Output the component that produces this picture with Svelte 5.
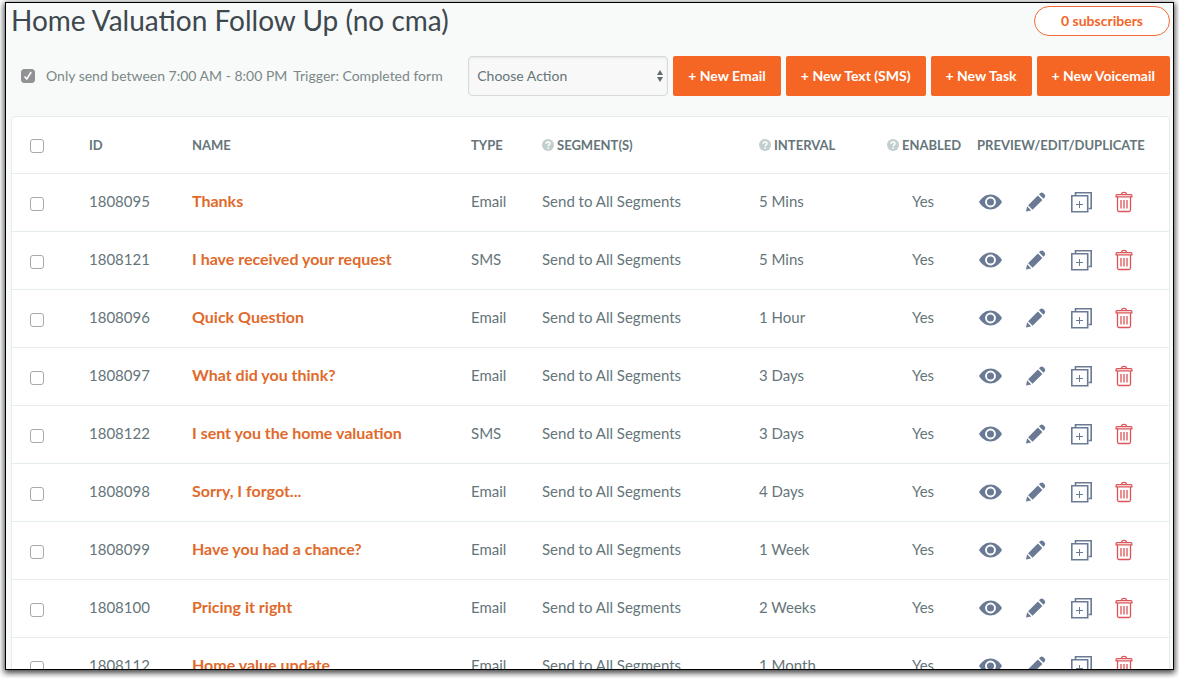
<script>
  const rows = [
    { id: 1808095, name: 'Thanks', type: 'Email', interval: '5 Mins' },
    { id: 1808121, name: 'I have received your request', type: 'SMS', interval: '5 Mins' },
    { id: 1808096, name: 'Quick Question', type: 'Email', interval: '1 Hour' },
    { id: 1808097, name: 'What did you think?', type: 'Email', interval: '3 Days' },
    { id: 1808122, name: 'I sent you the home valuation', type: 'SMS', interval: '3 Days' },
    { id: 1808098, name: 'Sorry, I forgot...', type: 'Email', interval: '4 Days' },
    { id: 1808099, name: 'Have you had a chance?', type: 'Email', interval: '1 Week' },
    { id: 1808100, name: 'Pricing it right', type: 'Email', interval: '2 Weeks' },
    { id: 1808112, name: 'Home value update', type: 'Email', interval: '1 Month' }
  ];
  const actions = ['+ New Email', '+ New Text (SMS)', '+ New Task', '+ New Voicemail'];
  let limited = $state(true);
</script>

{#snippet help()}
  <svg class="help" viewBox="0 0 12 12" aria-hidden="true">
    <circle cx="6" cy="6" r="6" fill="#c3cfce" />
    <path d="M4 4.7C4 3.5 4.8 2.9 6 2.9s2 .7 2 1.7c0 1.4-1.8 1.2-1.8 2.6M6.2 8.2v1.5" fill="none" stroke="#fff" stroke-width="1.5" />
  </svg>
{/snippet}

<main class="frame">
  <header class="top">
    <h1>Home Valuation Follow Up (no cma)</h1>
    <a class="pill" href="#subscribers">0 subscribers</a>
  </header>

  <div class="toolbar">
    <div class="schedule">
      <label><input type="checkbox" bind:checked={limited} /><span>Only send between 7:00 AM - 8:00 PM</span></label>
      <span>Trigger: Completed form</span>
    </div>
    <div class="actions">
      <div class="select">
        <select aria-label="Choose Action"><option>Choose Action</option></select>
        <svg viewBox="0 0 6 14" aria-hidden="true"><path d="M0 6 3 1l3 5zM0 8h6l-3 5z" fill="#5f6b6c" /></svg>
      </div>
      {#each actions as action}
        <button class="primary">{action}</button>
      {/each}
    </div>
  </div>

  <section class="card">
    <table>
      <colgroup>
        <col class="c-check" /><col class="c-id" /><col /><col class="c-type" />
        <col class="c-seg" /><col class="c-int" /><col class="c-on" /><col class="c-act" />
      </colgroup>
      <thead>
        <tr>
          <th class="check"><input type="checkbox" aria-label="Select all" /></th>
          <th>ID</th>
          <th>NAME</th>
          <th>TYPE</th>
          <th><span class="hint">{@render help()}SEGMENT(S)</span></th>
          <th><span class="hint">{@render help()}INTERVAL</span></th>
          <th><span class="hint">{@render help()}ENABLED</span></th>
          <th class="wide">PREVIEW/EDIT/DUPLICATE</th>
        </tr>
      </thead>
      <tbody>
        {#each rows as row (row.id)}
          <tr>
            <td class="check"><input type="checkbox" aria-label={row.name} /></td>
            <td>{row.id}</td>
            <td><a href="#{row.id}">{row.name}</a></td>
            <td>{row.type}</td>
            <td>Send to All Segments</td>
            <td>{row.interval}</td>
            <td class="center">Yes</td>
            <td class="tools">
              <div class="icons">
                <button aria-label="Preview">
                  <svg viewBox="0 0 24 24" fill="#6a7a94">
                    <path d="M0 12C3 7.200 7 4.500 11.500 4.500S20 7.200 23 12c-3 4.800-7 7.500-11.500 7.500S3 16.800 0 12z" />
                    <circle cx="11.500" cy="12" r="4.500" fill="none" stroke="#fff" stroke-width="1.900" />
                  </svg>
                </button>
                <button aria-label="Edit">
                  <svg viewBox="0 0 24 24" fill="#6a7a94">
                    <path d="M2 21.500l1.100-5.200 4.100 4.100zM4.100 15.200 13.900 5.400l4.500 4.500-9.800 9.800zM15 4.300l1.300-1.200c1-.900 2.100-.800 2.900 0l1.400 1.400c.800.800.900 1.900 0 2.900l-1.200 1.300z" />
                  </svg>
                </button>
                <button aria-label="Duplicate">
                  <svg viewBox="0 0 24 24" fill="none" stroke="#6a7a94">
                    <path d="M6.500 5.200V2.700H22.200v15.800H19.500" stroke-width="1.600" />
                    <path d="M2.800 5.800h15.900v15.900H2.800z" stroke-width="1.600" />
                    <path d="M10.500 11v7M7 14.500h7" stroke-width="1" />
                  </svg>
                </button>
                <button aria-label="Delete">
                  <svg viewBox="0 0 24 24" fill="none" stroke="#dc5457" stroke-width="1.300">
                    <path d="M7.500 4.300c0-2.700 5-2.700 5 0M3 4.600h14c.700 0 .900.600.900 1.500v.800H2.100v-.800c0-.900.200-1.500.900-1.500zM3.500 7v13c0 1 .500 1.500 1.500 1.500h10c1 0 1.500-.500 1.500-1.500V7M7 10v8.500M10 10v8.500M13 10v8.500" />
                  </svg>
                </button>
              </div>
            </td>
          </tr>
        {/each}
      </tbody>
    </table>
  </section>
</main>

<style>
  :global(body) {
    background: #fff;
    overflow: hidden;
  }
  .frame {
    box-sizing: border-box;
    height: calc(100vh - 10px);
    margin: 2px 5px 8px;
    padding: 0 3px 0 5px;
    overflow: hidden;
    border: 1px solid #000;
    background: #f7faf9;
    box-shadow: 0 2px 6px 1px rgba(0, 0, 0, 0.75);
    color: #65757a;
    font: 15px/20px Lato, sans-serif;
  }
  .top {
    display: flex;
    justify-content: space-between;
    align-items: flex-start;
    padding-top: 3px;
  }
  h1 {
    margin: 0;
    color: #3e484e;
    font-size: 28px;
    font-weight: 400;
    line-height: 28px;
  }
  .pill {
    box-sizing: border-box;
    height: 30px;
    padding: 0 26px;
    border: 1px solid #f26a35;
    border-radius: 15px;
    background: #fff;
    color: #f26529;
    font-size: 14px;
    font-weight: 700;
    line-height: 28px;
    text-decoration: none;
  }
  .toolbar {
    display: flex;
    justify-content: space-between;
    align-items: center;
    margin: 20px 0;
  }
  .schedule {
    display: flex;
    gap: 6px;
    padding-left: 10px;
    color: #7c8888;
    font-size: 14px;
  }
  .schedule label {
    display: flex;
    align-items: center;
    gap: 11px;
  }
  input {
    appearance: none;
    box-sizing: border-box;
    width: 14px;
    height: 14px;
    margin: 0;
    border: 1px solid #a9a9a9;
    border-radius: 3px;
    background: #fff;
  }
  input:checked {
    border-color: #929196;
    background: #929196 url("data:image/svg+xml,%3Csvg xmlns='http://www.w3.org/2000/svg' viewBox='0 0 12 12'%3E%3Cpath d='M2.500 6.500l2.300 2.500 4.400-7' fill='none' stroke='white' stroke-width='1.600'/%3E%3C/svg%3E") center / 12px no-repeat;
  }
  .actions {
    display: flex;
    gap: 5px;
  }
  .select {
    position: relative;
    width: 200px;
  }
  select {
    appearance: none;
    box-sizing: border-box;
    width: 100%;
    height: 40px;
    padding: 0 8px 2px;
    border: 1px solid #d5dadb;
    border-radius: 4px;
    background: #f8f8f8;
    box-shadow: inset 0 1px 2px rgba(0, 0, 0, 0.08);
    color: #65757a;
    font: 14px Lato, sans-serif;
  }
  .select svg {
    position: absolute;
    top: 13px;
    right: 5px;
    width: 6px;
    height: 14px;
    pointer-events: none;
  }
  .primary {
    height: 40px;
    padding: 0 15px 2px;
    border: 0;
    border-radius: 2px;
    background: #f56524;
    color: #fff;
    font: 700 14px Lato, sans-serif;
    white-space: nowrap;
  }
  .card {
    border: 1px solid #e4ecec;
    border-radius: 4px 4px 0 0;
    background: #fff;
  }
  table {
    width: 100%;
    border-collapse: collapse;
    table-layout: fixed;
  }
  .c-check { width: 69px; }
  .c-id { width: 103px; }
  .c-type { width: 71px; }
  .c-seg { width: 217px; }
  .c-int { width: 128px; }
  .c-on { width: 88px; }
  .c-act { width: 202px; }
  th,
  td {
    box-sizing: border-box;
    height: 58px;
    padding: 0 0 2px 8px;
    border-bottom: 1px solid #e4ecec;
    text-align: left;
    white-space: nowrap;
  }
  th {
    height: 56px;
    padding-bottom: 0;
    font-size: 13px;
    font-weight: 700;
  }
  .wide {
    padding-left: 10px;
  }
  .check {
    padding: 3px 0 0 18px;
  }
  .check input {
    display: block;
  }
  .center {
    padding-left: 0;
    text-align: center;
  }
  .tools {
    padding-bottom: 0;
  }
  td a {
    color: #e06a2b;
    font-size: 16px;
    font-weight: 700;
    text-decoration: none;
  }
  .hint {
    display: flex;
    align-items: center;
    gap: 3px;
  }
  .help {
    width: 12px;
    height: 12px;
  }
  .icons {
    display: flex;
    gap: 21px;
    padding-left: 4px;
  }
  .icons button {
    width: 24px;
    height: 24px;
    padding: 0;
    border: 0;
    background: none;
  }
  .icons svg {
    display: block;
    width: 24px;
    height: 24px;
  }
</style>
